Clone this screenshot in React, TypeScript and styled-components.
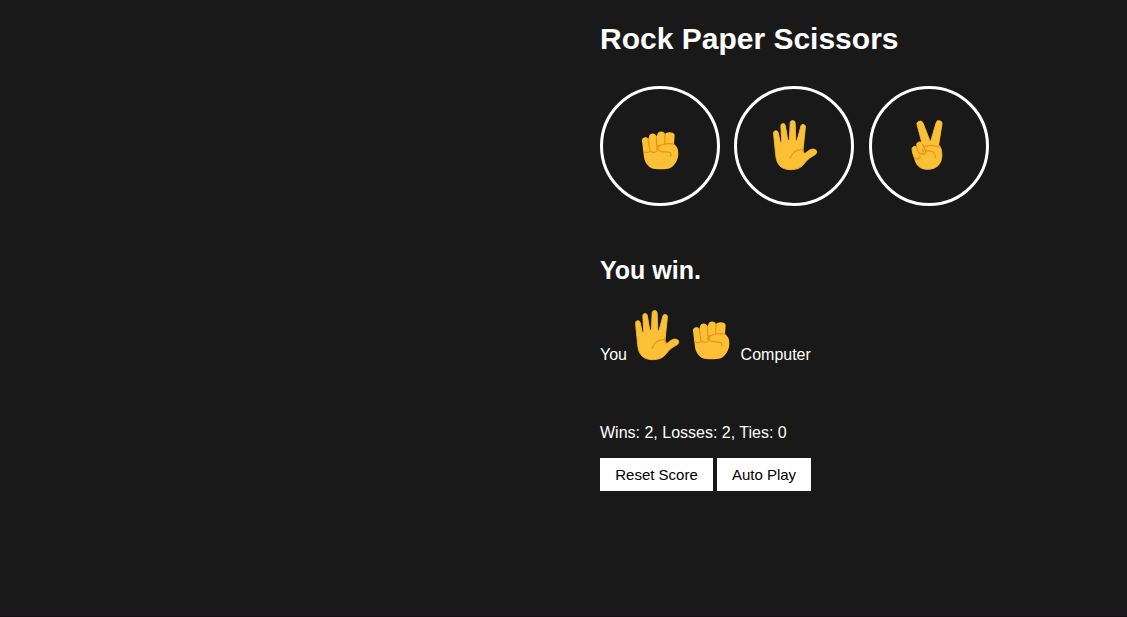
import React from "react";
import styled, { createGlobalStyle } from "styled-components";

const GlobalStyle = createGlobalStyle`
  body {
    margin: 0;
    background: #191919;
    color: #fff;
    font: 16px/18px "Liberation Sans", Arial, sans-serif;
  }
`;

const Game = styled.main`
  box-sizing: border-box;
  min-height: 617px;
  padding: 21px 0 0 600px;
  border-bottom: 1px solid #150f14;
  white-space: nowrap;
`;

const Title = styled.h1`
  margin: 0 0 29px;
  font-size: 30px;
  line-height: 36px;
`;

const Moves = styled.div`
  display: flex;
  gap: 14.45px;
`;

const MoveButton = styled.button`
  display: flex;
  align-items: center;
  justify-content: center;
  box-sizing: border-box;
  width: 120px;
  height: 120px;
  padding: 0 0 3px;
  border: 3px solid #fff;
  border-radius: 50%;
  background: transparent;
  cursor: pointer;
`;

const Result = styled.h2`
  margin: 50px 0 0;
  font-size: 25px;
  line-height: 29px;
`;

const Picks = styled.div`
  display: flex;
  align-items: flex-end;
  height: 60px;
  margin-top: 15px;
  padding-bottom: 4px;
`;

const Player = styled.span`
  margin-bottom: -4px;
`;

const PickIcon = styled.span<{ $left: number; $right: number }>`
  display: flex;
  margin: 0 ${(p) => p.$right}px 0 ${(p) => p.$left}px;
`;

const Score = styled.p`
  margin: 60px 0 0;
`;

const Actions = styled.div`
  display: flex;
  gap: 4px;
  margin-top: 16px;
`;

const ActionButton = styled.button<{ $width: number }>`
  width: ${(p) => p.$width}px;
  height: 33px;
  padding: 0;
  border: 0;
  background: #fff;
  color: #000;
  font: 15px/17px "Liberation Sans", Arial, sans-serif;
  cursor: pointer;
`;

const Hand = styled.svg`
  display: block;
  height: 50px;
  overflow: visible;
  fill: #fbc036;

  .skin {
    stroke: #fbc036;
    stroke-width: 2.4;
    stroke-linejoin: round;
  }

  .crease {
    fill: none;
    stroke: #e99719;
    stroke-width: 3.8;
    stroke-linecap: round;
    stroke-linejoin: round;
  }
`;

const Rock = () => (
  <Hand width="38" height="50" viewBox="33 0 114 150" aria-label="Rock">
    <path d="M36 64C34 52 51 48 55 57L57 50C58 37 77 38 79 49L82 44C83 32 103 32 105 43C108 34 134 34 134 46L132 73C140 78 145 86 145 99C146 120 132 140 119 145C108 149 75 149 65 145C54 139 44 127 42 111Z" />
    <path className="crease" d="M41 94C45 99 56 99 60 93C64 98 77 99 81 93M55 58L60 92M79 50L81 91M105 43L104 70M132 73C119 69 97 72 89 77C79 84 85 94 96 95C105 96 114 94 121 98C125 101 123 106 121 109M81 77L87 76" />
  </Hand>
);

const Paper = () => (
  <Hand width="45" height="50" viewBox="23.5 17 135 150" aria-label="Paper">
    <path className="skin" d="M28 57A7.2 7.2 0 0 1 42 54L48 82Q50.5 86 52.5 82L50 36A6.9 6.9 0 0 1 63.5 33L70.5 75Q73 79 75.5 75L78 25A7.6 7.6 0 0 1 93 25L95 77Q97 80 99 77L110 35A7.2 7.2 0 0 1 124 37L117 103C116 119 122 119 129 112C138 104 148 102 155 107C159 111 159 117 153 121C141 128 130 134 121 147C111 161 99 166 78 166C51 166 38 150 35 126Z" />
    <path className="crease" d="M78 132C85 112 97 105 115 106M117 99L116 107Q116 114 119 116" />
  </Hand>
);

const Scissors = () => (
  <Hand width="34" height="50" viewBox="39 17 102 150" aria-label="Scissors">
    <path className="skin" d="M54.5 33A9 9 0 0 1 72 26L91.5 76Q94 81 96.5 76L111 26A9.2 9.2 0 0 1 129 30L119 92C130 100 131 129 125 142C118 158 104 165 84 165C63 165 52 152 48 137C44 124 39 115 39 104C39 96 49 93 54 99L53 92C52 83 65 79 69 87Z" />
    <path className="crease" d="M54 100C53 109 61 121 69 118C75 116 74 110 70 105M71 91L80 111C83 117 74 122 69 118M47 129C49 137 63 136 63 125M75 97C87 91 114 94 120 99M76 98C75 107 81 110 91 110C101 110 110 116 109 129" />
  </Hand>
);

export default function App() {
  return (
    <>
      <GlobalStyle />
      <Game>
        <Title>Rock Paper Scissors</Title>
        <Moves>
          <MoveButton><Rock /></MoveButton>
          <MoveButton><Paper /></MoveButton>
          <MoveButton><Scissors /></MoveButton>
        </Moves>
        <Result>You win.</Result>
        <Picks>
          <Player>You</Player>
          <PickIcon $left={7} $right={13}><Paper /></PickIcon>
          <PickIcon $left={0} $right={10.6}><Rock /></PickIcon>
          <Player>Computer</Player>
        </Picks>
        <Score>Wins: 2, Losses: 2, Ties: 0</Score>
        <Actions>
          <ActionButton $width={113}>Reset Score</ActionButton>
          <ActionButton $width={94}>Auto Play</ActionButton>
        </Actions>
      </Game>
    </>
  );
}
